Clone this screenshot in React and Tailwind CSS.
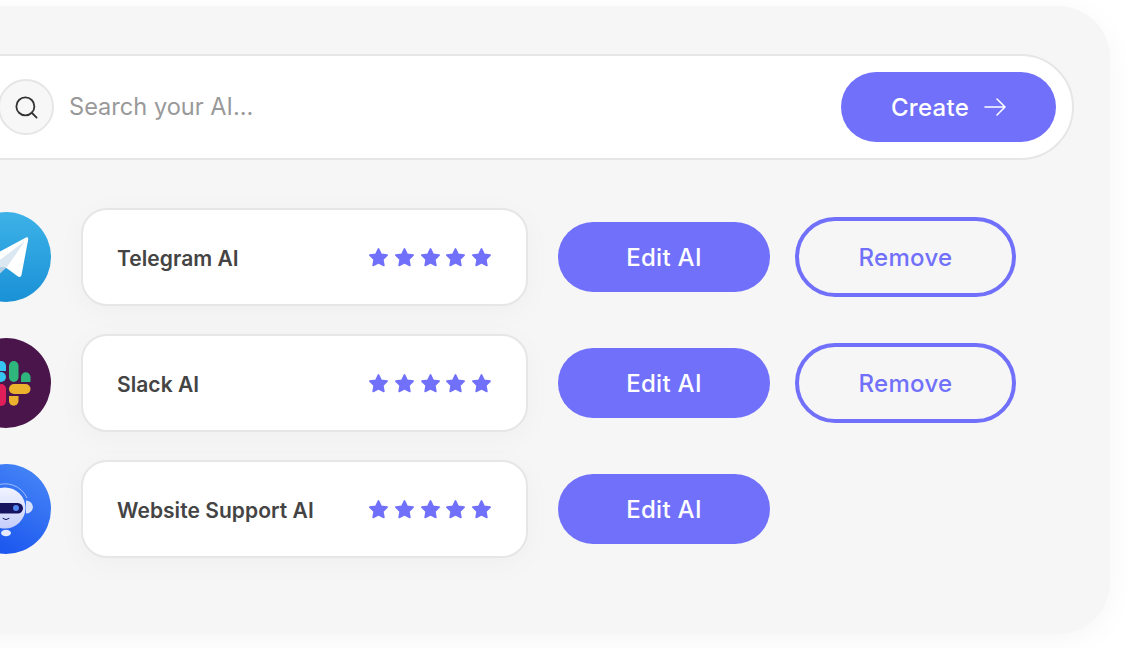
import React from 'react';
import { Search } from 'lucide-react';

const AI_ROWS = [
    { name: 'Telegram AI', logo: 'telegram', removable: true },
    { name: 'Slack AI', logo: 'slack', removable: true },
    { name: 'Website Support AI', logo: 'robot', removable: false }
];

const Star = () => (
    <svg viewBox="0 0 20 20" className="w-[21px] h-[21px] shrink-0">
        <path
            d="M10 1.800 12.500 7l5.700.8-4.100 4 1 5.800L10 14.900l-5.100 2.700 1-5.800-4.100-4L7.500 7Z"
            fill="#7170fa"
            stroke="#7170fa"
            strokeWidth="1.600"
            strokeLinejoin="round"
        />
    </svg>
);

const TelegramLogo = () => (
    <svg viewBox="-39 212 90 90" className="w-[90px] h-[90px]">
        <defs>
            <linearGradient id="tg" x1="0" y1="0" x2="0" y2="1">
                <stop offset="0" stopColor="#3db2e8" />
                <stop offset="1" stopColor="#1a91d6" />
            </linearGradient>
        </defs>
        <circle cx="6" cy="257" r="45" fill="url(#tg)" />
        <path d="M7 267-6 279-6 263Z" fill="#b5d0e2" />
        <path
            d="M-14 259 26 237.500c1.500-.6 2.500.3 2.200 2L21.500 275c-.4 2-2 2.500-3.500 1.500L-3 261-14 261.500c-2-.8-2-1.800 0-2.500Z"
            fill="#ffffff"
        />
        <path d="M25 241-3 262-3 267 7 267Z" fill="#dbe8f2" />
    </svg>
);

const SlackLogo = () => (
    <svg viewBox="-39 338 90 90" className="w-[90px] h-[90px]">
        <circle cx="6" cy="383" r="45" fill="#4a154b" />
        <rect x="-15" y="372" width="21" height="10" rx="5" fill="#36c5f0" />
        <path d="M-4 371h10v-5a5 5 0 0 0-10 0Z" fill="#36c5f0" />
        <rect x="9" y="361" width="9.500" height="21" rx="4.750" fill="#2eb67d" />
        <path d="M21 382h9.500v-5a4.750 4.750 0 0 0-9.500 0Z" fill="#2eb67d" />
        <rect x="9" y="384" width="21.500" height="10" rx="5" fill="#ecb22e" />
        <path d="M9 396h9.500v5a4.750 4.750 0 0 1-9.500 0Z" fill="#ecb22e" />
        <rect x="-3.500" y="384" width="9.500" height="22" rx="4.750" fill="#e01e5a" />
        <path d="M-15 394h9v-5a4.500 4.500 0 0 0-9 0Z" fill="#e01e5a" />
    </svg>
);

const RobotLogo = () => (
    <svg viewBox="-39 464 90 90" className="w-[90px] h-[90px]">
        <defs>
            <linearGradient id="bot" x1="0.8" y1="0" x2="0.2" y2="1">
                <stop offset="0" stopColor="#4585f6" />
                <stop offset="1" stopColor="#1650ee" />
            </linearGradient>
            <linearGradient id="face" x1="0" y1="0" x2="0" y2="1">
                <stop offset="0" stopColor="#f2f4ff" />
                <stop offset="1" stopColor="#c4cdfb" />
            </linearGradient>
        </defs>
        <circle cx="6" cy="509" r="45" fill="url(#bot)" />
        <path d="M-6 486.500A24 24 0 0 1 27 498" fill="none" stroke="#a9c6fc" strokeWidth="0.900" />
        <path d="M26 500.500a7 7 0 0 1 7 6.500 7 7 0 0 1-7 6.500Z" fill="#d6e0fd" />
        <circle cx="5" cy="508" r="20.500" fill="url(#face)" />
        <rect x="-12" y="503" width="35" height="10.500" rx="5.250" fill="#15135f" />
        <circle cx="16" cy="508" r="3" fill="#4f86f2" />
        <path d="M3 518.500q3 2.500 6 0" fill="none" stroke="#15135f" strokeWidth="1" strokeLinecap="round" />
        <ellipse cx="6" cy="533" rx="5" ry="3.200" fill="#e4e8fd" />
    </svg>
);

const LOGOS = { telegram: TelegramLogo, slack: SlackLogo, robot: RobotLogo };

const AiRow = ({ name, logo, removable }) => {
    const Logo = LOGOS[logo];
    return (
        <div className="flex items-center h-[98px] ml-[11px]">
            <Logo />
            <div className="flex items-center justify-between w-[447px] h-[98px] ml-[30px] pl-[34px] pr-[34px] bg-white border-2 border-[#e6e6e6] rounded-[26px] shadow-[0_6px_30px_rgba(0,0,0,0.03)]">
                <span className="pt-[3px] text-[21px] font-semibold text-[#444444] tracking-[0.05px]">{name}</span>
                <div className="flex gap-[4.750px]">
                    {[0, 1, 2, 3, 4].map((i) => <Star key={i} />)}
                </div>
            </div>
            <button className="flex items-center justify-center w-[212px] h-[70px] pt-[1px] ml-[30px] rounded-full bg-[#7170fa] text-white text-2xl font-[450] tracking-[0.3px]">
                Edit AI
            </button>
            {removable && (
                <button className="flex items-center justify-center w-[221px] h-[80px] pt-[1px] ml-[25px] rounded-full border-4 border-[#7170fa] text-[#7170fa] text-2xl font-[450] tracking-[0.3px]">
                    Remove
                </button>
            )}
        </div>
    );
};

export default function App() {
    return (
        <div className="w-[1127px] h-[648px] overflow-hidden bg-white font-['Inter',sans-serif]">
            <div className="w-[1170px] h-[628px] -ml-[60px] mt-[6px] pl-[10px] pt-[48px] bg-[#f6f6f6] rounded-[52px] shadow-[0_6px_30px_rgba(0,0,0,0.04)]">
                <div className="flex items-center justify-between w-[1124px] h-[106px] pl-[46px] pr-[16px] bg-white border-2 border-[#e6e6e6] rounded-full">
                    <div className="flex items-center">
                        <div className="flex items-center justify-center w-[56px] h-[56px] rounded-full bg-[#f7f7f7] border-2 border-[#e6e6e6]">
                            <Search className="w-[27px] h-[27px] text-[#333333]" strokeWidth={1.6} />
                        </div>
                        <span className="ml-[15px] text-[23.6px] text-[#999999]">Search your AI...</span>
                    </div>
                    <button className="flex items-center justify-center gap-[15px] w-[215px] h-[70px] rounded-full bg-[#7170fa] text-white text-2xl font-[450] tracking-[0.3px]">
                        <span className="pt-[1px]">Create</span>
                        <svg viewBox="0 0 22 18" className="w-[22px] h-[18px]" fill="none" stroke="currentColor" strokeWidth="1.600" strokeLinecap="round" strokeLinejoin="round">
                            <path d="M1 9h20M13 1l8 8-8 8" />
                        </svg>
                    </button>
                </div>
                <div className="flex flex-col gap-[28px] mt-[48px]">
                    {AI_ROWS.map((row) => <AiRow key={row.name} {...row} />)}
                </div>
            </div>
        </div>
    );
}
